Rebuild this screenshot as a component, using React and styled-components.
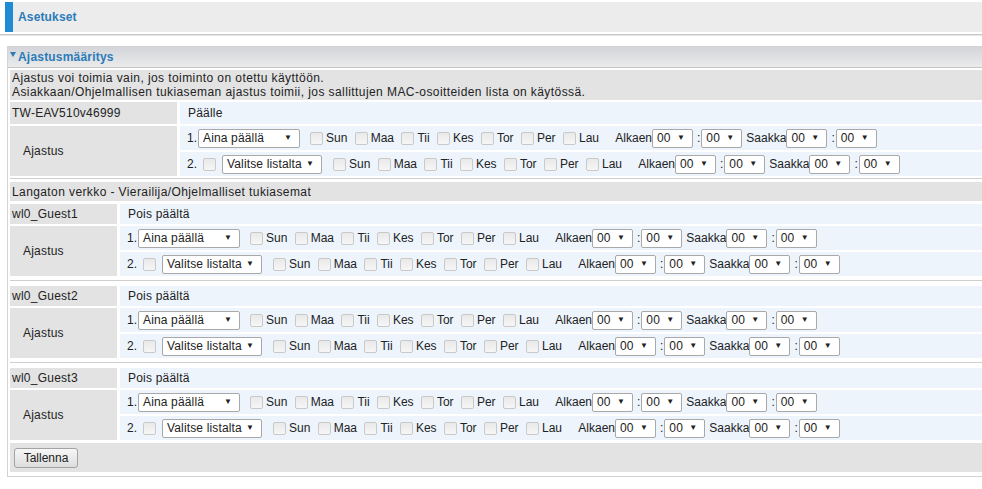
import React from "react";
import styled, { createGlobalStyle } from "styled-components";

const Global = createGlobalStyle`
  html, body { margin: 0; padding: 0; background: #fff; overflow: hidden; }
  body {
    font-family: "Liberation Sans", Arial, sans-serif;
    font-size: 12px;
    color: #222;
  }
`;

const Page = styled.div`
  padding-top: 2px;
`;

const TopBar = styled.div`
  margin-left: 5px;
  height: 30px;
  background: #ececec;
  border-left: 8px solid #1f8bd5;
  display: flex;
  align-items: center;
  padding-left: 5px;
  font-weight: bold;
  font-size: 12px;
  letter-spacing: 0.15px;
  color: #2b7bb8;
`;

const Rule = styled.div`
  margin-top: 2px;
  height: 0;
  border-top: 1px solid #c9c9c9;
  border-bottom: 1px solid #e4e4e4;
`;

const Panel = styled.section`
  margin: 10px 0 0 7px;
  border: 1px solid #d3d3d3;
  border-right: none;
`;

const PanelHeader = styled.div`
  height: 20px;
  display: flex;
  align-items: center;
  gap: 2px;
  padding-left: 2px;
  background: linear-gradient(#d3d5da, #ebebeb);
  border-bottom: 1px solid #c4c4c4;
  font-weight: bold;
  letter-spacing: 0.2px;
  color: #2b7bb8;
`;

const Caret = styled.svg`
  width: 6px;
  height: 5px;
  margin-bottom: 5px;
`;

const PanelBody = styled.div`
  display: flex;
  flex-direction: column;
  padding: 2px 0 4px 2px;
`;

const Intro = styled.div`
  background: #e3e3e3;
  padding: 1px 2px;
  line-height: 14px;
  letter-spacing: 0.42px;
`;

const Block = styled.div`
  display: grid;
  grid-template-columns: ${(p) => p.$label}px 1fr;
  column-gap: 3px;
  row-gap: 2px;
  margin-top: ${(p) => p.$top}px;
`;

const NameCell = styled.div`
  background: #e3e3e3;
  height: ${(p) => p.$h}px;
  display: flex;
  align-items: center;
  padding-left: 2px;
  letter-spacing: 0.25px;
`;

const ValueCell = styled.div`
  background: #edf4fc;
  height: ${(p) => p.$h}px;
  display: flex;
  align-items: center;
  padding-left: 8px;
  letter-spacing: 0.2px;
`;

const LabelCell = styled.div`
  grid-row: span 2;
  background: #e3e3e3;
  display: flex;
  align-items: center;
  padding-left: 13px;
  letter-spacing: 0.2px;
`;

const SubRow = styled.div`
  background: #edf4fc;
  height: 24px;
  display: flex;
  align-items: center;
  padding-left: 7px;
  white-space: nowrap;
`;

const Separator = styled.div`
  height: 0;
  border-top: 1px solid #cfcfcf;
  margin: ${(p) => p.$m};
`;

const SectionTitle = styled.div`
  background: #e3e3e3;
  height: 19px;
  display: flex;
  align-items: center;
  padding-left: 2px;
  letter-spacing: 0.4px;
`;

const Check = styled.span`
  display: inline-block;
  box-sizing: border-box;
  width: 13px;
  height: 13px;
  border: 1px solid #c9c9c9;
  border-radius: 2px;
  background: linear-gradient(#e9e9e9, #f6f6f6);
  margin-left: ${(p) => p.$ml || 0}px;
  flex: none;
`;

const Days = styled.div`
  display: flex;
  align-items: center;
  margin-left: ${(p) => p.$ml}px;
`;

const Day = styled.span`
  display: inline-flex;
  align-items: center;
  margin-right: 3.33px;
  & > ${Check} {
    margin: 0 3px 0 4px;
  }
`;

const SelectBox = styled.span`
  display: inline-flex;
  align-items: center;
  box-sizing: border-box;
  height: 19px;
  width: ${(p) => p.$w}px;
  margin-left: ${(p) => p.$ml || 0}px;
  padding: 0 7px 0 4px;
  border: 1px solid #a9a9a9;
  border-radius: 2px;
  background: #fff;
  flex: none;
  letter-spacing: 0.15px;
`;

const Arrow = styled.span`
  margin-left: auto;
  font-size: 8px;
  line-height: 1;
`;

const Text = styled.span`
  margin-left: ${(p) => p.$ml || 0}px;
`;

const Colon = styled.span`
  margin: 0 1px 0 4px;
`;

const SaveRow = styled.div`
  margin-top: 3px;
  background: #e3e3e3;
  height: 29px;
  display: flex;
  align-items: center;
  padding-left: 4px;
`;

const Button = styled.button`
  box-sizing: border-box;
  height: 20px;
  width: 64px;
  padding: 0;
  border: 1px solid #a3a3a3;
  border-radius: 3px;
  background: linear-gradient(#f7f7f7, #dddddd);
  font-family: "Liberation Sans", Arial, sans-serif;
  font-size: 12px;
  color: #222;
`;

const DAYS = ["Sun", "Maa", "Tii", "Kes", "Tor", "Per", "Lau"];

const Select = ({ w, ml, children }) => (
  <SelectBox $w={w} $ml={ml}>
    <span>{children}</span>
    <Arrow>▼</Arrow>
  </SelectBox>
);

const DayList = ({ ml }) => (
  <Days $ml={ml}>
    {DAYS.map((d) => (
      <Day key={d}>
        <Check />
        {d}
      </Day>
    ))}
  </Days>
);

const TimeRange = () => (
  <>
    <Text $ml={13}>Alkaen</Text>
    <Select w={41}>00</Select>
    <Colon>:</Colon>
    <Select w={41}>00</Select>
    <Text $ml={4}>Saakka</Text>
    <Select w={41}>00</Select>
    <Colon>:</Colon>
    <Select w={41}>00</Select>
  </>
);

const Schedule = () => (
  <>
    <SubRow>
      <span>1.</span>
      <Select w={102} ml={1}>
        Aina päällä
      </Select>
      <DayList ml={6} />
      <TimeRange />
    </SubRow>
    <SubRow>
      <span>2.</span>
      <Check $ml={6} />
      <Select w={100} ml={6}>
        Valitse listalta
      </Select>
      <DayList ml={7} />
      <TimeRange />
    </SubRow>
  </>
);

const GUESTS = ["wl0_Guest1", "wl0_Guest2", "wl0_Guest3"];

export default function App() {
  return (
    <Page>
      <Global />
      <TopBar>Asetukset</TopBar>
      <Rule />
      <Panel>
        <PanelHeader>
          <Caret viewBox="0 0 6 5">
            <polygon points="0,0 6,0 3,5" fill="#2b7bb8" />
          </Caret>
          Ajastusmääritys
        </PanelHeader>
        <PanelBody>
          <Intro>
            Ajastus voi toimia vain, jos toiminto on otettu käyttöön.
            <br />
            Asiakkaan/Ohjelmallisen tukiaseman ajastus toimii, jos sallittujen
            MAC-osoitteiden lista on käytössä.
          </Intro>
          <Block $label={167} $top={2}>
            <NameCell $h={22}>TW-EAV510v46999</NameCell>
            <ValueCell $h={22}>Päälle</ValueCell>
            <LabelCell>Ajastus</LabelCell>
            <Schedule />
          </Block>
          <Separator $m="2px 0 3px" />
          <SectionTitle>Langaton verkko - Vierailija/Ohjelmalliset tukiasemat</SectionTitle>
          {GUESTS.map((g, i) => (
            <React.Fragment key={g}>
              {i > 0 && <Separator $m="4px 0 5px" />}
              <Block $label={107} $top={i === 0 ? 3 : 0}>
                <NameCell $h={20}>{g}</NameCell>
                <ValueCell $h={20}>Pois päältä</ValueCell>
                <LabelCell>Ajastus</LabelCell>
                <Schedule />
              </Block>
            </React.Fragment>
          ))}
          <SaveRow>
            <Button type="button">Tallenna</Button>
          </SaveRow>
        </PanelBody>
      </Panel>
    </Page>
  );
}
